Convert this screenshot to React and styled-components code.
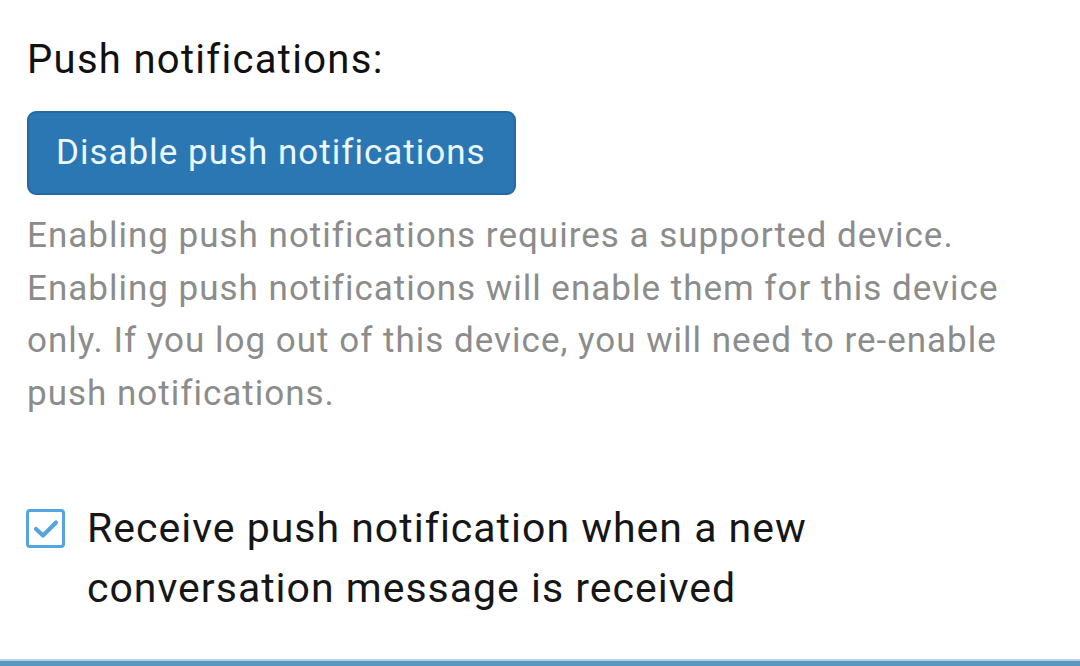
import React from 'react';
import styled, { createGlobalStyle } from 'styled-components';

const GlobalStyle = createGlobalStyle`
	html, body {
		margin: 0;
		padding: 0;
		background: #ffffff;
		font-family: Roboto, "Noto Sans", sans-serif;
	}
`;

const Page = styled.div`
	height: 666px;
	display: flex;
	flex-direction: column;
	overflow: hidden;
`;

const Content = styled.div`
	flex: 1;
	padding: 33px 28px 0 27px;
`;

const Title = styled.h3`
	margin: 0 0 24px;
	font-size: 40px;
	font-weight: 400;
	line-height: 54px;
	letter-spacing: 1.3px;
	color: #111;
`;

const Btn = styled.button`
	display: inline-block;
	font-family: inherit;
	font-size: 35px;
	line-height: 50px;
	letter-spacing: 1px;
	padding: 15px 28px 15px 27px;
	color: #eaf8ff;
	background-color: #2a77b3;
	border: 2px solid #236aa3;
	border-radius: 9px;
	cursor: pointer;
`;

const Help = styled.p`
	margin: 15px 0 0;
	font-size: 35px;
	line-height: 52.5px;
	color: #8c8c8c;
	letter-spacing: 1px;
`;

const CheckRow = styled.label`
	display: flex;
	align-items: flex-start;
	gap: 22px;
	margin-top: 78px;
	max-width: 960px;
	cursor: pointer;
`;

const Box = styled.span`
	flex: none;
	box-sizing: border-box;
	width: 39px;
	height: 39px;
	margin-top: 11px;
	margin-left: -1px;
	border: 3.5px solid #55a5e2;
	border-radius: 4px;
	display: flex;
	align-items: center;
	justify-content: center;
	background: #fff;
`;

const LabelText = styled.span`
	font-size: 41px;
	line-height: 60px;
	letter-spacing: 1px;
	color: #161616;
`;

const BottomBar = styled.div`
	height: 5px;
	background: #5b96c0;
	border-top: 2px solid #b9d0e1;
`;

const App = () => {
	return (
		<Page>
			<GlobalStyle />
			<Content>
				<Title>Push notifications:</Title>
				<Btn>Disable push notifications</Btn>
				<Help>
					Enabling push notifications requires a supported device. Enabling push notifications will enable
					them for this device only. If you log out of this device, you will need to re-enable push
					notifications.
				</Help>
				<CheckRow>
					<Box>
						<svg width="26" height="20" viewBox="0 0 26 20">
							<path d="M3 10 L10 16.5 L23 3.5" fill="none" stroke="#55a5e2" strokeWidth="4.2" strokeLinecap="round" strokeLinejoin="round" />
						</svg>
					</Box>
					<LabelText>Receive push notification when a new conversation message is received</LabelText>
				</CheckRow>
			</Content>
			<BottomBar />
		</Page>
	);
};

export default App;
